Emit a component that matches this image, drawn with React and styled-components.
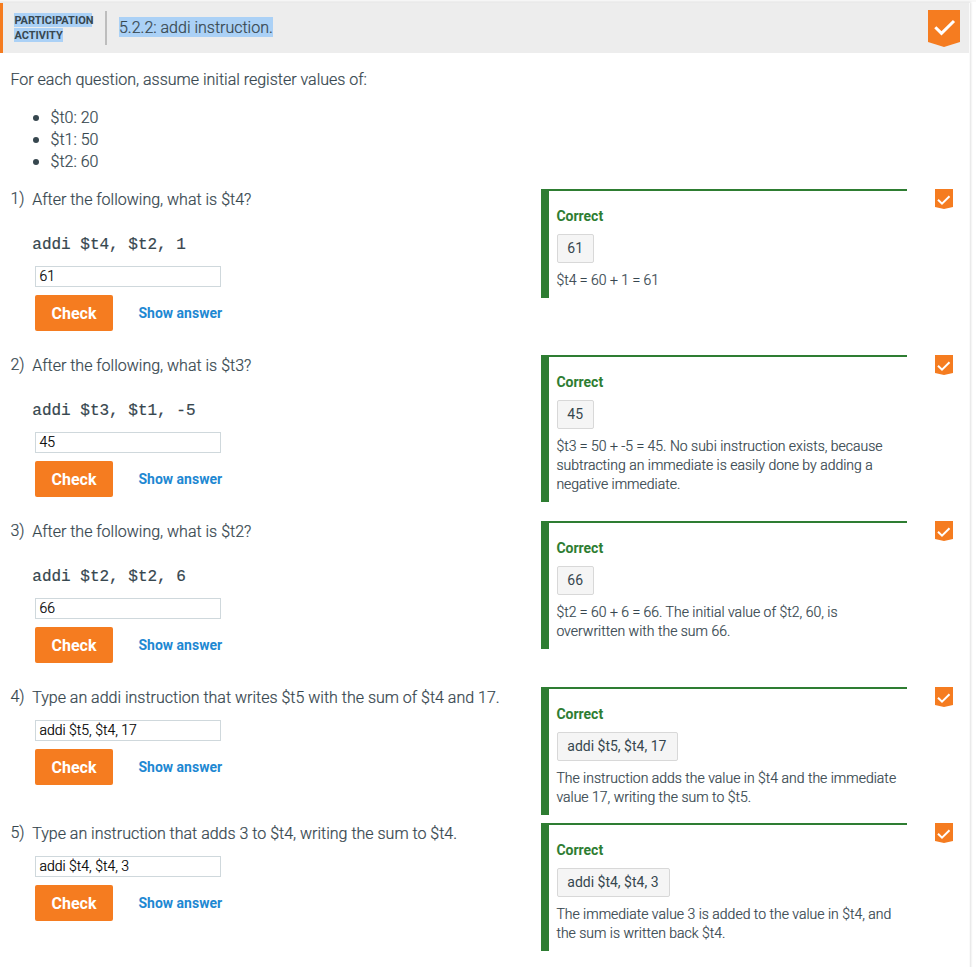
import React from "react";
import styled, { createGlobalStyle } from "styled-components";

const GlobalStyle = createGlobalStyle`
  * { box-sizing: border-box; }
  body {
    margin: 0;
    background: #fff;
    color: #37474f;
    font-family: Roboto, "Liberation Sans", sans-serif;
    font-size: 16px;
    font-weight: 300;
    line-height: 22px;
    -webkit-text-stroke: 0.2px;
  }
`;

const Page = styled.div`
  height: 967px;
  padding-top: 3px;
  overflow: hidden;
  background: linear-gradient(#f8f8f8 0 2px, #fff 2px);
`;

const Activity = styled.main`
  width: 970px;
  height: 980px;
  border-right: 1px solid #fafafa;
  box-shadow: 0 0 2px 1px rgba(0, 0, 0, 0.12);
  background: #fff;
`;

const Header = styled.header`
  display: flex;
  align-items: flex-start;
  height: 50px;
  padding: 7px 9px 0 11.4px;
  border-left: 3px solid #f57c20;
  background: #ededed;
`;

const Kind = styled.div`
  width: 90.6px;
  padding-top: 3px;
  font-size: 11px;
  font-weight: 700;
  line-height: 15px;
  -webkit-text-stroke: 0;
`;

const Selected = styled.span`
  background: #abd1f6;
`;

const KindLine = styled(Selected)`
  display: block;
  width: ${(p) => p.$width}px;
  height: 14px;
  margin-bottom: 1px;
  white-space: nowrap;
`;

const Title = styled.h1`
  display: flex;
  flex: 1;
  height: 34px;
  margin: 1px 0 0;
  padding: 6px 0 0 12px;
  border-left: 2px solid #bdbdbd;
  font-size: 16px;
  font-weight: 300;
  line-height: 21px;
`;

const TitleText = styled(Selected)`
  height: 20px;
  white-space: nowrap;
`;

const Intro = styled.p`
  margin: 0;
  padding: 16px 10px 0 10.5px;
`;

const Registers = styled.ul`
  margin: 15px 0 17px;
  padding-left: 50.5px;

  li::marker {
    font-size: 18px;
  }
`;

const Register = styled.li`
  height: 22px;
`;

const Question = styled.section`
  display: grid;
  grid-template-columns: 21.6px 509px 366px 18px;
  align-items: start;
  height: ${(p) => p.$height}px;
  padding-left: 10.4px;
`;

const Number = styled.div`
  margin-top: -1px;
`;

const Prompt = styled.div`
  padding-left: 0.2px;
`;

const Code = styled.div`
  margin-top: 23px;
  padding-left: 0.3px;
  font-family: "Liberation Mono", monospace;
  font-weight: 400;
  white-space: pre;
`;

const Answer = styled.input`
  display: block;
  width: 186px;
  height: 21px;
  margin: ${(p) => (p.$afterCode ? 10 : 11)}px 0 8px 3px;
  padding: 0 3.4px 2px;
  border: 1px solid #cfd8dc;
  border-radius: 0;
  outline: 0;
  background: #fff;
  color: #000;
  font: 300 14px Roboto, sans-serif;
`;

const Actions = styled.div`
  display: flex;
  align-items: center;
  gap: 25.5px;
  margin-left: 3px;
  -webkit-text-stroke: 0;
`;

const CheckButton = styled.button`
  width: 78px;
  height: 36px;
  padding: 0;
  border: 0;
  border-radius: 2px;
  background: #f57c20;
  color: #fff;
  font: 700 16px Roboto, sans-serif;
`;

const ShowAnswer = styled.button`
  padding: 0;
  border: 0;
  background: none;
  color: #1e88d2;
  font: 700 14px Roboto, sans-serif;
`;

const Explanation = styled.div`
  padding: 16px 8px 8px 7.4px;
  border-top: 2px solid #2e7d32;
  border-left: 8px solid #2e7d32;
  font-size: 14px;
  line-height: 19px;
`;

const Verdict = styled.div`
  color: #2e7d32;
  font-weight: 700;
  -webkit-text-stroke: 0;
`;

const Chip = styled.div`
  width: fit-content;
  height: 29px;
  margin: 8px 0 8px 0.3px;
  padding: 4px 10.3px 4px 9.6px;
  border: 1px solid #d8d8d8;
  border-radius: 2px;
  background: #f5f5f5;
  font-weight: 400;
  -webkit-text-stroke: 0;
`;

const ExplanationLine = styled.div`
  white-space: nowrap;
`;

const Badge = styled.svg`
  display: block;
  flex: none;
  margin-left: ${(p) => p.$indent || 0}px;
`;

function CheckBadge({ large }) {
  if (large) {
    return (
      <Badge width="32" height="37" viewBox="0 0 32 37">
        <path d="M0 0h32v32l-16 5-16-5z" fill="#f57c20" />
        <path d="M7.3 17.2l6.2 6.2L26 11" fill="none" stroke="#fff" strokeWidth="3" />
      </Badge>
    );
  }
  return (
    <Badge $indent={28} width="18" height="20" viewBox="0 0 18 20">
      <path d="M0 0h18v18l-9 2-9-2z" fill="#f57c20" />
      <path d="M3 10.7l4 4L14.5 7.2" fill="none" stroke="#fff" strokeWidth="2" />
    </Badge>
  );
}

const questions = [
  { prompt: "After the following, what is $t4?", code: "addi $t4, $t2, 1", answer: "61", lines: ["$t4 = 60 + 1 = 61"], height: 166 },
  {
    prompt: "After the following, what is $t3?",
    code: "addi $t3, $t1, -5",
    answer: "45",
    lines: ["$t3 = 50 + -5 = 45. No subi instruction exists, because", "subtracting an immediate is easily done by adding a", "negative immediate."],
    height: 166,
  },
  {
    prompt: "After the following, what is $t2?",
    code: "addi $t2, $t2, 6",
    answer: "66",
    lines: ["$t2 = 60 + 6 = 66. The initial value of $t2, 60, is", "overwritten with the sum 66."],
    height: 166,
  },
  {
    prompt: "Type an addi instruction that writes $t5 with the sum of $t4 and 17.",
    answer: "addi $t5, $t4, 17",
    lines: ["The instruction adds the value in $t4 and the immediate", "value 17, writing the sum to $t5."],
    height: 136,
  },
  {
    prompt: "Type an instruction that adds 3 to $t4, writing the sum to $t4.",
    answer: "addi $t4, $t4, 3",
    lines: ["The immediate value 3 is added to the value in $t4, and", "the sum is written back $t4."],
    height: 136,
  },
];

export default function App() {
  return (
    <Page>
      <GlobalStyle />
      <Activity>
        <Header>
          <Kind>
            <KindLine $width={78}>PARTICIPATION</KindLine>
            <KindLine $width={49}>ACTIVITY</KindLine>
          </Kind>
          <Title>
            <TitleText>5.2.2: addi instruction.</TitleText>
          </Title>
          <CheckBadge large />
        </Header>
        <Intro>For each question, assume initial register values of:</Intro>
        <Registers>
          <Register>$t0: 20</Register>
          <Register>$t1: 50</Register>
          <Register>$t2: 60</Register>
        </Registers>
        {questions.map((q, i) => (
          <Question key={i} $height={q.height}>
            <Number>{i + 1})</Number>
            <div>
              <Prompt>{q.prompt}</Prompt>
              {q.code && <Code>{q.code}</Code>}
              <Answer $afterCode={!!q.code} defaultValue={q.answer} />
              <Actions>
                <CheckButton>Check</CheckButton>
                <ShowAnswer>Show answer</ShowAnswer>
              </Actions>
            </div>
            <Explanation>
              <Verdict>Correct</Verdict>
              <Chip>{q.answer}</Chip>
              {q.lines.map((line) => (
                <ExplanationLine key={line}>{line}</ExplanationLine>
              ))}
            </Explanation>
            <CheckBadge />
          </Question>
        ))}
      </Activity>
    </Page>
  );
}
